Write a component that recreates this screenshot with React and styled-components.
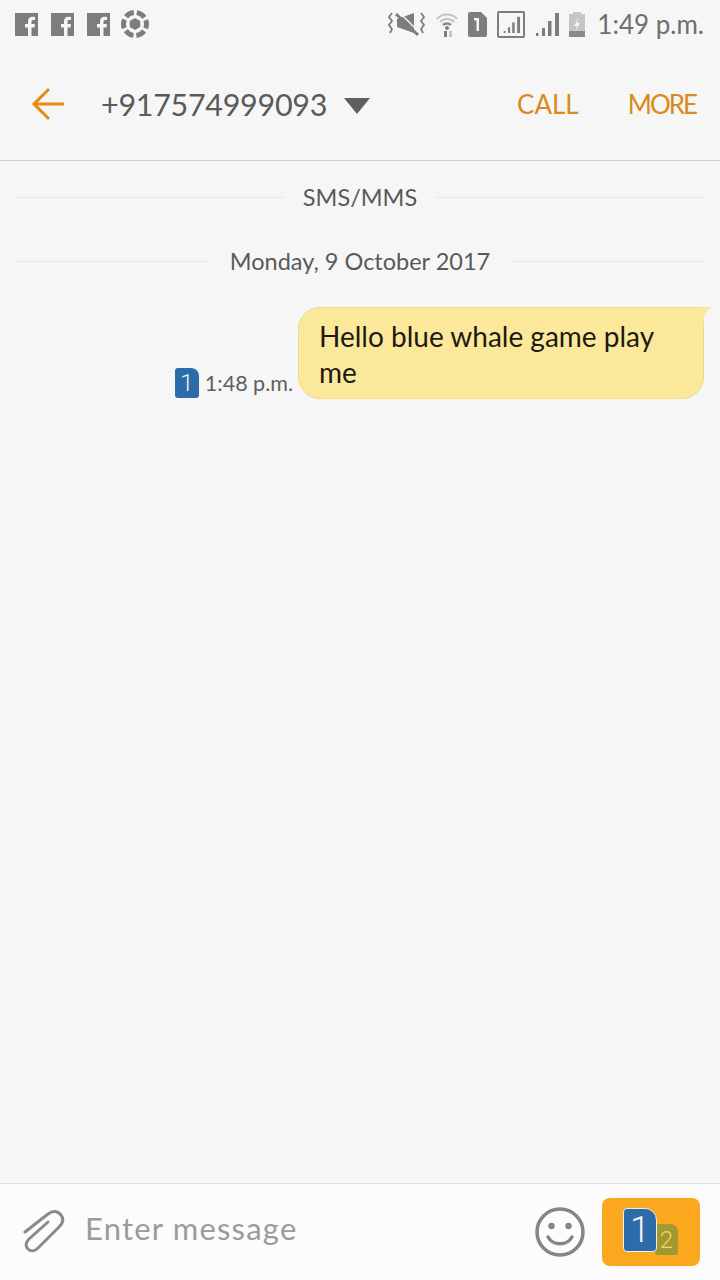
import React from "react";
import styled, { createGlobalStyle } from "styled-components";

const GlobalStyle = createGlobalStyle`
  html, body {
    margin: 0;
    padding: 0;
    background: #f6f6f6;
    font-family: Lato, "Open Sans", sans-serif;
  }
`;

function FbIcon() {
  return (
    <svg width="23" height="23" viewBox="0 0 23 23">
      <path fill="#7d7d7d" d="M0 0h23v23h-6.500v-8.500h3l.5-3.500h-3.500V8.800c0-1 .4-1.700 1.800-1.700h1.800V4c-.5-.1-1.500-.2-2.700-.2-2.700 0-4.400 1.600-4.400 4.500V11H10v3.500h3V23H0z" />
    </svg>
  );
}

function BallIcon() {
  return (
    <svg width="30" height="30" viewBox="0 0 30 30">
      <path fill="#7d7d7d" d="M15 9l5.200 3v6L15 21l-5.200-3v-6z" />
      <circle cx="15" cy="15" r="11.500" fill="none" stroke="#7d7d7d" strokeWidth="5" strokeDasharray="9 3.040" strokeDashoffset="4.500" />
    </svg>
  );
}

function MuteIcon() {
  return (
    <svg width="38" height="26" viewBox="0 0 38 26">
      <path fill="#7d7d7d" d="M9 8l17-6v20L9 16z" />
      <path stroke="#f6f6f6" strokeWidth="1.500" d="M11 1l21 21" />
      <path stroke="#7d7d7d" strokeWidth="3" d="M8 3l22 21" />
      <path fill="none" stroke="#7d7d7d" strokeWidth="1.800" d="M4 2L1 6l3 4-3 4 3 4-2 4 M33 2l3 4-3 4 3 4-3 4 2 4" />
    </svg>
  );
}

function WifiIcon() {
  return (
    <svg width="22" height="26" viewBox="0 0 22 26">
      <path fill="none" stroke="#c4c4c4" strokeWidth="2" d="M1 8c5-6 15-6 20 0 M4 11c4-4 10-4 14 0" />
      <path fill="none" stroke="#8a8a8a" strokeWidth="2.500" d="M7 14c2-2 6-2 8 0" />
      <circle cx="11" cy="17" r="2" fill="#7d7d7d" />
      <path fill="#7d7d7d" d="M8 20h3v6H8z" />
      <path fill="#c4c4c4" d="M13 20h3v6h-3z" />
    </svg>
  );
}

function SimGrey() {
  return (
    <svg width="19" height="25" viewBox="0 0 19 25">
      <path fill="#7d7d7d" d="M2 0h11l6 6v17a2 2 0 0 1-2 2H2a2 2 0 0 1-2-2V2a2 2 0 0 1 2-2z" />
      <path fill="#f6f6f6" d="M6 6h5v13H8.500V8.500H6z" />
    </svg>
  );
}

function Bars({ size }) {
  return (
    <svg width={size} height={size} viewBox="0 0 24 24">
      <path fill="#7d7d7d" d="M1 21h2.500v3H1zM7 16h3v8H7zM13 9h3.500v15H13zM20 1h4v23h-4z" />
    </svg>
  );
}

function BatteryIcon() {
  return (
    <svg width="16" height="25" viewBox="0 0 16 25">
      <path fill="#c6c6c6" d="M4 0h8v2h4v23H0V2h4z" />
      <path fill="#8a8a8a" d="M0 19h16v6H0z" />
      <path fill="#f6f6f6" d="M10 5l-5 9h3l-2 6 5-9H8z" />
    </svg>
  );
}

function BackArrow() {
  return (
    <svg width="34" height="34" viewBox="0 0 34 34">
      <path fill="none" stroke="#e58a14" strokeWidth="3" d="M33 17H3 M18 2L3 17l15 15" />
    </svg>
  );
}

function Paperclip() {
  return (
    <svg width="42" height="46" viewBox="0 0 42 46">
      <path
        fill="none"
        stroke="#8a8a8a"
        strokeWidth="3"
        strokeLinecap="round"
        d="M2 23L25 5c5-4 10-3 13 1 3 4 2 8-2 12L15 39c-3 3-7 4-10 1-3-3-2-7 1-10l19-17"
      />
    </svg>
  );
}

function Smiley() {
  return (
    <svg width="50" height="50" viewBox="0 0 50 50">
      <circle cx="25" cy="25" r="23" fill="none" stroke="#858585" strokeWidth="3.500" />
      <circle cx="16.500" cy="19" r="3.200" fill="#858585" />
      <circle cx="33.500" cy="19" r="3.200" fill="#858585" />
      <path fill="none" stroke="#858585" strokeWidth="3.500" strokeLinecap="round" d="M13 30c5 9 19 9 24 0" />
    </svg>
  );
}

function App() {
  return (
    <Screen>
      <GlobalStyle />
      <StatusBar>
        <StatusGroup>
          <FbIcon />
          <FbIcon />
          <FbIcon />
          <BallIcon />
        </StatusGroup>
        <StatusRight>
          <MuteIcon />
          <WifiIcon />
          <SimGrey />
          <SignalBox>
            <Bars size={20} />
          </SignalBox>
          <Bars size={24} />
          <BatteryIcon />
          <Clock>1:49 p.m.</Clock>
        </StatusRight>
      </StatusBar>

      <Header>
        <BackArrow />
        <PhoneNumber>+917574999093</PhoneNumber>
        <Caret />
        <Actions>
          <Action>CALL</Action>
          <Action $tight>MORE</Action>
        </Actions>
      </Header>

      <Thread>
        <Divider>
          <Rule />
          <DividerText>SMS/MMS</DividerText>
          <Rule />
        </Divider>
        <Divider>
          <Rule />
          <DividerText>Monday, 9 October 2017</DividerText>
          <Rule />
        </Divider>
        <MessageRow>
          <Meta>
            <SimBadge>1</SimBadge>
            <Time>1:48 p.m.</Time>
          </Meta>
          <Bubble>Hello blue whale game play me</Bubble>
        </MessageRow>
      </Thread>

      <Composer>
        <Paperclip />
        <Placeholder>Enter message</Placeholder>
        <Smiley />
        <SendButton>
          <SendSim>1</SendSim>
          <SendSimSecond>2</SendSimSecond>
        </SendButton>
      </Composer>
    </Screen>
  );
}

const Screen = styled.div`
  width: 720px;
  height: 1280px;
  display: flex;
  flex-direction: column;
  background: #f6f6f6;
  overflow: hidden;
`;

const StatusBar = styled.div`
  height: 50px;
  flex-shrink: 0;
  display: flex;
  align-items: center;
  justify-content: space-between;
  padding: 0 16px 2px 15px;
  box-sizing: border-box;
`;

const StatusGroup = styled.div`
  display: flex;
  align-items: center;
  gap: 13px;

  svg:last-child {
    margin-left: -3px;
  }
`;

const StatusRight = styled.div`
  display: flex;
  align-items: center;
  gap: 10px;
`;

const SignalBox = styled.div`
  width: 28px;
  height: 27px;
  box-sizing: border-box;
  border: 2px solid #7d7d7d;
  border-radius: 2px;
  display: flex;
  align-items: center;
  justify-content: center;

  svg {
    width: 17px;
    height: 17px;
  }
`;

const Clock = styled.span`
  font-size: 26px;
  color: #6f6f6f;
  margin-left: 2px;
`;

const Header = styled.div`
  height: 111px;
  flex-shrink: 0;
  box-sizing: border-box;
  border-bottom: 1px solid #cfcfcf;
  display: flex;
  align-items: center;
  padding: 0 24px 2px 31px;
`;

const PhoneNumber = styled.div`
  font-size: 30.500px;
  color: #5a5a5a;
  margin-left: 36px;
  letter-spacing: -0.3px;
`;

const Caret = styled.div`
  width: 0;
  height: 0;
  margin: 4px 0 0 17px;
  border-left: 13px solid transparent;
  border-right: 13px solid transparent;
  border-top: 16px solid #5f5f5f;
`;

const Actions = styled.div`
  margin-left: auto;
  display: flex;
  gap: 49px;
`;

const Action = styled.div`
  font-size: 26px;
  color: #d98a1c;
  letter-spacing: ${(props) => (props.$tight ? "-2px" : "0")};
`;

const Thread = styled.div`
  flex: 1;
  display: flex;
  flex-direction: column;
  padding: 21px 8px 0 15px;
`;

const Divider = styled.div`
  height: 30px;
  display: flex;
  align-items: center;
  gap: 20px;
  padding-right: 7px;
  margin-bottom: 34px;
`;

const Rule = styled.div`
  flex: 1;
  height: 1px;
  background: #e6e6e6;
`;

const DividerText = styled.div`
  font-size: 23.500px;
  color: #595959;
`;

const MessageRow = styled.div`
  display: flex;
  justify-content: flex-end;
  align-items: flex-end;
  gap: 5px;
  margin-top: -3px;
  padding-right: 8px;
`;

const Meta = styled.div`
  display: flex;
  align-items: center;
  gap: 6px;
  margin-bottom: 1px;
`;

const SimBadge = styled.div`
  width: 24px;
  height: 30px;
  background: #2c6cab;
  color: #f2f6fa;
  border-radius: 3px;
  border-top-right-radius: 8px;
  font-family: Roboto, sans-serif;
  font-size: 24px;
  font-weight: 300;
  display: flex;
  align-items: center;
  justify-content: center;
`;

const Time = styled.div`
  font-size: 21.500px;
  color: #5f5f5f;
`;

const Bubble = styled.div`
  position: relative;
  width: 406px;
  height: 92px;
  box-sizing: border-box;
  padding: 10px 20px 0;
  background: #fbe89b;
  border: 1px solid #efd98a;
  border-radius: 22px 0 22px 22px;
  font-size: 28px;
  line-height: 36px;
  color: #1c1a12;

  &::after {
    content: "";
    position: absolute;
    top: -1px;
    right: -9px;
    width: 9px;
    height: 18px;
    background: radial-gradient(ellipse 9px 17px at 100% 100%, transparent 97%, #fbe89b 100%);
  }
`;

const Composer = styled.div`
  height: 97px;
  flex-shrink: 0;
  box-sizing: border-box;
  border-top: 1px solid #dedede;
  background: #fcfcfc;
  display: flex;
  align-items: center;
  padding: 0 20px 0 23px;
`;

const Placeholder = styled.div`
  flex: 1;
  margin-left: 20px;
  padding-bottom: 8px;
  font-size: 31px;
  letter-spacing: 1.200px;
  color: #9b9b9b;
`;

const SendButton = styled.div`
  position: relative;
  width: 98px;
  height: 68px;
  margin-left: 17px;
  background: #fba81e;
  border-radius: 8px;
`;

const SendSim = styled.div`
  position: absolute;
  left: 21px;
  top: 10px;
  width: 34px;
  height: 44px;
  box-sizing: border-box;
  background: #2c6cab;
  color: #f6f6f6;
  border: 1px solid #eeeeee;
  border-radius: 4px;
  border-top-right-radius: 12px;
  font-family: Roboto, sans-serif;
  font-size: 36px;
  font-weight: 300;
  display: flex;
  align-items: center;
  justify-content: center;
  z-index: 1;
`;

const SendSimSecond = styled.div`
  position: absolute;
  left: 53px;
  top: 26px;
  width: 23px;
  height: 31px;
  background: #a19a33;
  color: #f7d25a;
  border-radius: 2px;
  border-top-right-radius: 8px;
  font-family: Roboto, sans-serif;
  font-size: 24px;
  font-weight: 300;
  display: flex;
  align-items: center;
  justify-content: center;
`;

export default App;
